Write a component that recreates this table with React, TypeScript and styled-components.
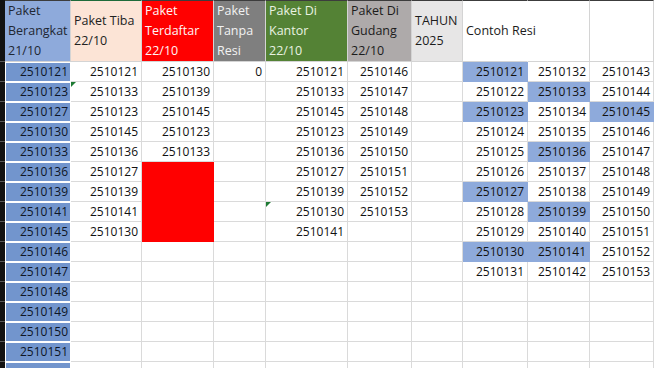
import React from 'react';
import styled, { createGlobalStyle } from 'styled-components';

const GlobalStyle = createGlobalStyle`
  html, body {
    margin: 0;
    padding: 0;
    background: #fff;
    overflow: hidden;
  }
  body {
    font-family: "Open Sans", "Liberation Sans", sans-serif;
  }
`;

const Sheet = styled.div`
  display: grid;
  grid-template-columns: 5px 66px 71px 72px 52px 82px 64px 51px 65px 62px 64px;
  grid-template-rows: 62px;
  grid-auto-rows: 20px;
  width: 654px;
  height: 368px;
  overflow: hidden;
  font-size: 12px;
  color: #111;
`;

const Strip = styled.div`
  background: #121212;
  border-bottom: 1px solid #5a5a5a;
  box-sizing: border-box;
`;

const HeadCell = styled.div<{ $bg: string; $fg: string; $top?: string; $open?: boolean }>`
  box-sizing: border-box;
  background: ${(p) => p.$bg};
  color: ${(p) => p.$fg};
  border-top: 1px solid ${(p) => p.$top || '#3c3c3c'};
  border-right: 1px solid ${(p) => (p.$open ? 'transparent' : '#d4d4d4')};
  border-bottom: 1px solid #d4d4d4;
  display: flex;
  flex-direction: column;
  justify-content: center;
  padding: 0 2px 0 3px;
  font-size: 12.5px;
  line-height: 20px;
  white-space: nowrap;
  overflow: visible;
  position: relative;
  z-index: ${(p) => (p.$open ? 2 : 1)};
`;

const Cell = styled.div<{ $fill?: string }>`
  box-sizing: border-box;
  background: ${(p) => p.$fill || '#fff'};
  border-right: 1px solid ${(p) => p.$fill || '#dadada'};
  border-bottom: 1px solid ${(p) => p.$fill || '#dadada'};
  text-align: right;
  padding: 0 3px;
  line-height: 19px;
  position: relative;
`;

const SelCell = styled.div`
  box-sizing: border-box;
  padding: 1px;
  background: #fff;
`;

const SelFill = styled.div`
  height: 100%;
  background: #7295cd;
  color: #0e1526;
  text-align: right;
  padding-right: 2px;
  line-height: 17px;
`;

const Flag = styled.span`
  position: absolute;
  left: 0;
  top: 0;
  width: 0;
  height: 0;
  border-top: 5px solid #1e7b34;
  border-right: 5px solid transparent;
`;

type Head = { lines: string[]; bg: string; fg: string; top?: string; open?: boolean };

const heads: Head[] = [
  { lines: ['Paket', 'Berangkat', '21/10'], bg: '#8eaadb', fg: '#1f2733' },
  { lines: ['Paket Tiba', '22/10'], bg: '#fce4d6', fg: '#222', top: '#1e6b3a' },
  { lines: ['Paket', 'Terdaftar', '22/10'], bg: '#ff0000', fg: '#fff5f5' },
  { lines: ['Paket', 'Tanpa', 'Resi'], bg: '#7f7f7f', fg: '#f2f2f2' },
  { lines: ['Paket Di', 'Kantor', '22/10'], bg: '#548235', fg: '#e9f2e1' },
  { lines: ['Paket Di', 'Gudang', '22/10'], bg: '#aeaaaa', fg: '#1c1c1c' },
  { lines: ['TAHUN', '2025'], bg: '#e7e6e6', fg: '#1c1c1c' },
  { lines: ['Contoh Resi'], bg: '#fff', fg: '#1c1c1c', open: true },
  { lines: [], bg: '#fff', fg: '#1c1c1c' },
  { lines: [], bg: '#fff', fg: '#1c1c1c' },
];

// last entry is the row cut off at the bottom edge, its value is not visible
const colA: (number | undefined)[] = [121, 123, 127, 130, 133, 136, 139, 141, 145, 146, 147, 148, 149, 150, 151, undefined];
const colB = [121, 133, 123, 145, 136, 127, 139, 141, 130];
const colC = [130, 139, 145, 123, 133];
const colE = [121, 133, 145, 123, 136, 127, 139, 130, 141];
const colF = [146, 147, 148, 149, 150, 151, 152, 153];
const marked = new Set([121, 123, 127, 130, 133, 136, 139, 141, 145]);

const RED = '#ff0000';
const BLUE = '#8eaadb';

const num = (n: number | undefined) => (n === undefined ? '' : `2510${n}`);

export default function App() {
  const rows = colA.map((a, i) => {
    const h = i < 11 ? 121 + i : undefined;
    const iv = i < 11 ? 132 + i : undefined;
    const j = i < 11 ? 143 + i : undefined;
    const redBlock = i >= 5 && i <= 8;
    return (
      <React.Fragment key={i}>
        <Strip />
        <SelCell>
          <SelFill>{num(a)}</SelFill>
        </SelCell>
        <Cell>
          {i === 1 && <Flag />}
          {num(colB[i])}
        </Cell>
        <Cell $fill={redBlock ? RED : undefined}>{num(colC[i])}</Cell>
        <Cell>{i === 0 ? '0' : ''}</Cell>
        <Cell>
          {i === 7 && <Flag />}
          {num(colE[i])}
        </Cell>
        <Cell>{num(colF[i])}</Cell>
        <Cell />
        <Cell $fill={h && marked.has(h) ? BLUE : undefined}>{num(h)}</Cell>
        <Cell $fill={iv && marked.has(iv) ? BLUE : undefined}>{num(iv)}</Cell>
        <Cell $fill={j && marked.has(j) ? BLUE : undefined}>{num(j)}</Cell>
      </React.Fragment>
    );
  });

  return (
    <>
      <GlobalStyle />
      <Sheet>
        <Strip />
        {heads.map((hd, k) => (
          <HeadCell key={k} $bg={hd.bg} $fg={hd.fg} $top={hd.top} $open={hd.open}>
            {hd.lines.map((l) => (
              <div key={l}>{l}</div>
            ))}
          </HeadCell>
        ))}
        {rows}
      </Sheet>
    </>
  );
}
